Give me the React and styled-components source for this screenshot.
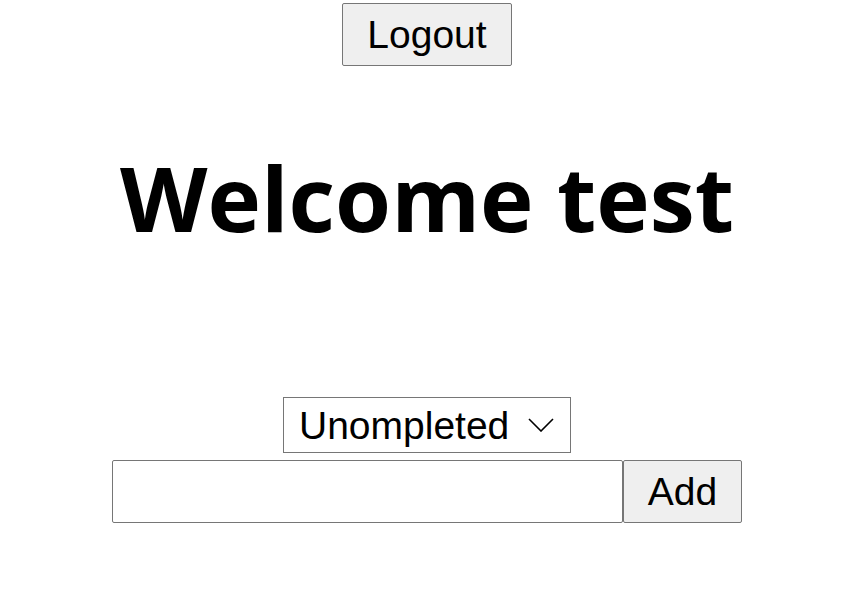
import React, { useState } from 'react';
import styled, { createGlobalStyle } from 'styled-components';

const GlobalStyle = createGlobalStyle`
    body {
        margin: 0;
        background: #ffffff;
        font-family: "Liberation Sans", Arial, sans-serif;
    }
`;

const Page = styled.div`
    width: 854px;
    display: flex;
    flex-direction: column;
    align-items: center;
`;

const Button = styled.button`
    box-sizing: border-box;
    width: ${props => props.$width}px;
    height: 63px;
    padding: 0;
    background-color: #efefef;
    border: 1px solid #767676;
    border-radius: 2px;
    color: #000;
    font-family: "Liberation Sans", Arial, sans-serif;
    font-size: 39px;
`;

const LogoutButton = styled(Button)`
    margin-top: 3px;
`;

const Heading = styled.h1`
    margin: 76px 0 0;
    height: 255px;
    font-family: "Open Sans", "Noto Sans", sans-serif;
    font-weight: 700;
    font-size: 90.5px;
    line-height: 110px;
    color: #000;
`;

const SelectWrap = styled.div`
    position: relative;
    width: 288px;
    height: 56px;
`;

const Select = styled.select`
    box-sizing: border-box;
    width: 100%;
    height: 100%;
    appearance: none;
    background: #fff;
    border: 1px solid #767676;
    border-radius: 0;
    padding: 0 0 0 15px;
    color: #000;
    font-family: "Liberation Sans", Arial, sans-serif;
    font-size: 39px;
`;

const Chevron = styled.svg`
    position: absolute;
    right: 17px;
    top: 21px;
    pointer-events: none;
`;

const AddRow = styled.div`
    display: flex;
    margin-top: 7px;
`;

const TodoInput = styled.input`
    box-sizing: border-box;
    width: 511px;
    height: 63px;
    border: 1px solid #767676;
    border-radius: 2px;
    padding: 0 8px;
    font-family: "Liberation Sans", Arial, sans-serif;
    font-size: 39px;
`;

const App = () => {
    const [filter, setFilter] = useState('uncompleted')
    const [text, setText] = useState('')

    return (
        <Page>
            <GlobalStyle />
            <LogoutButton $width={170}>Logout</LogoutButton>
            <Heading>Welcome test</Heading>
            <SelectWrap>
                <Select value={filter} onChange={e => setFilter(e.target.value)}>
                    <option value="all">All</option>
                    <option value="completed">Completed</option>
                    <option value="uncompleted">Unompleted</option>
                </Select>
                <Chevron width="26" height="14" viewBox="0 0 26 14">
                    <path d="M1 1 L13 13 L25 1" fill="none" stroke="#000" strokeWidth="1.6" />
                </Chevron>
            </SelectWrap>
            <AddRow>
                <TodoInput value={text} onChange={e => setText(e.target.value)} />
                <Button $width={119}>Add</Button>
            </AddRow>
        </Page>
    );
}

export default App;
